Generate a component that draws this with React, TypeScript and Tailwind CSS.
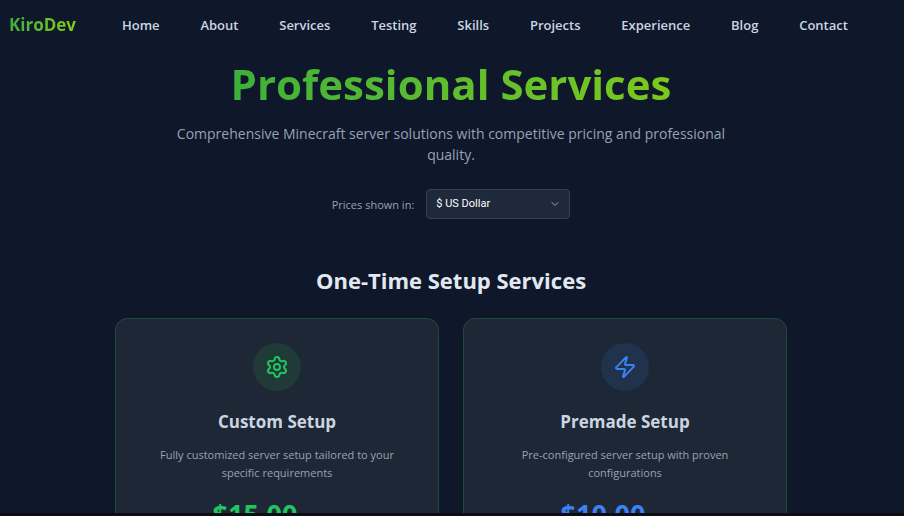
import { ChevronDown, Settings, Zap, type LucideIcon } from "lucide-react";

const links = ["Home", "About", "Services", "Testing", "Skills", "Projects", "Experience", "Blog", "Contact"];

type Service = {
  title: string;
  text: string;
  price: string;
  icon: LucideIcon;
  badge: string;
  accent: string;
};

const services: Service[] = [
  {
    title: "Custom Setup",
    text: "Fully customized server setup tailored to your specific requirements",
    price: "$15.00",
    icon: Settings,
    badge: "bg-[#1f3a37] text-[#22c55e]",
    accent: "text-[#22c55e]",
  },
  {
    title: "Premade Setup",
    text: "Pre-configured server setup with proven configurations",
    price: "$10.00",
    icon: Zap,
    badge: "bg-[#20324c] text-[#3b82f6]",
    accent: "text-[#3b82f6]",
  },
];

function ServiceCard({ title, text, price, icon: Icon, badge, accent }: Service) {
  return (
    <article className="flex flex-1 flex-col items-center rounded-xl border border-[#1d4a3c] bg-[#1e2735] p-6 text-center">
      <div className={`flex size-12 items-center justify-center rounded-full ${badge}`}>
        <Icon className="size-6" />
      </div>
      <h3 className="mt-4 text-[17px] leading-[30px] font-bold text-[#cbd5e1]">{title}</h3>
      <p className="mt-[9px] max-w-62 text-[11px] leading-[18px] text-[#94a3b8]">{text}</p>
      <div className="mt-3.5 flex w-full items-baseline justify-center">
        <span className={`mr-11 text-[27px] leading-9 font-bold ${accent}`}>{price}</span>
      </div>
    </article>
  );
}

export default function App() {
  return (
    <div className="flex h-screen flex-col overflow-hidden bg-[#0f172a] font-['Open_Sans','Noto_Sans',sans-serif]">
      <div className="min-h-0 flex-1 overflow-hidden pr-0.5">
        <header className="flex h-[50px] items-center pr-[54px] pl-[9px]">
          <a href="#home" className="w-[113px] shrink-0 text-[17px] font-bold">
            <span className="bg-linear-to-r from-[#3cb039] to-[#84cc16] bg-clip-text text-transparent">KiroDev</span>
          </a>
          <nav className="flex flex-1 justify-between pt-0.5 text-[13px] font-semibold text-[#cbd5e1]">
            {links.map((link) => (
              <a key={link} href={`#${link.toLowerCase()}`}>
                {link}
              </a>
            ))}
          </nav>
        </header>

        <main className="flex flex-col items-center">
          <h1 className="mt-[7px] bg-linear-to-r from-[#3cb039] to-[#7bc91a] bg-clip-text text-[42px] leading-[54px] font-bold text-transparent">
            Professional Services
          </h1>
          <p className="mt-3 max-w-[580px] text-center text-[14px] leading-[21px] text-[#94a3b8]">
            Comprehensive Minecraft server solutions with competitive pricing and professional quality.
          </p>

          <div className="mt-6 flex items-center gap-3">
            <label htmlFor="currency" className="pt-0.5 text-[11px] text-[#94a3b8]">
              Prices shown in:
            </label>
            <div className="relative">
              <select
                id="currency"
                className="block h-[30px] w-36 appearance-none rounded-sm border border-[#334155] bg-[#1e293b] px-[9px] font-['Roboto',sans-serif] text-[11px] text-white"
              >
                <option>$ US Dollar</option>
              </select>
              <ChevronDown className="pointer-events-none absolute top-[9px] right-[9px] size-3 text-[#94a3b8]" />
            </div>
          </div>

          <h2 className="mt-[45px] text-[22px] leading-8 font-bold text-[#e2e8f0]">One-Time Setup Services</h2>

          <section className="mt-[22px] flex w-full max-w-2xl gap-6">
            {services.map((service) => (
              <ServiceCard key={service.title} {...service} />
            ))}
          </section>
        </main>
      </div>
      <div className="h-[3px] shrink-0 bg-[#0d0d15]" />
    </div>
  );
}
